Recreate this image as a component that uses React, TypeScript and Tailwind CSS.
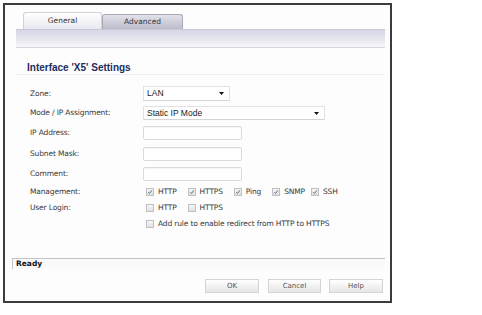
import React from "react";

const lbl = "font-['DejaVu_Sans',sans-serif] text-[7.5px] tracking-[-0.15px] text-[#383838]";

function Check({ checked }: { checked?: boolean }) {
  return (
    <span className="relative inline-block w-[8px] h-[8px] border border-[#c0c0c0] bg-gradient-to-b from-[#f6f6f6] to-[#e0e0e0] shrink-0">
      {checked && (
        <svg className="absolute left-[0px] top-[0px]" width="6" height="6" viewBox="0 0 6 6">
          <path d="M1.3 3.3 L2.5 4.5 L4.8 1.3" stroke="#4a5a7a" strokeWidth="0.9" fill="none" />
        </svg>
      )}
    </span>
  );
}

function CB({ checked, label, gap = "mr-[11px]" }: { checked?: boolean; label: string; gap?: string }) {
  return (
    <span className={`flex items-center ${gap}`}>
      <Check checked={checked} />
      <span className={`${lbl} ml-[4px]`}>{label}</span>
    </span>
  );
}

function Row({ label, mt, h, children }: { label: string; mt: string; h: string; children?: React.ReactNode }) {
  return (
    <div className={`flex items-center ${mt} ${h}`}>
      <div className={`${lbl} w-[113px] shrink-0`}>{label}</div>
      <div className="flex items-center h-full">{children}</div>
    </div>
  );
}

function Select({ w, text }: { w: string; text: string }) {
  return (
    <div className={`${w} h-full flex items-center justify-between border border-[#e2e2e2] border-b-[#d4d4d4] bg-white pl-[3px] pr-[5px]`}>
      <span className="font-['Liberation_Sans',sans-serif] text-[8.5px] text-[#222]">{text}</span>
      <svg width="5" height="3" viewBox="0 0 5 3">
        <path d="M0 0 L5 0 L2.5 3 Z" fill="#111" />
      </svg>
    </div>
  );
}

function Input() {
  return <div className="w-[99px] h-full border border-[#dadada] rounded-[2px] bg-white shadow-[inset_0_1px_1px_rgba(0,0,0,0.04)]" />;
}

function Btn({ text, w, ml }: { text: string; w: string; ml?: string }) {
  return (
    <div className={`${w} ${ml ?? ""} h-[14px] border border-[#d4d4d4] bg-gradient-to-b from-[#ffffff] to-[#e6e6e6] flex items-center justify-center font-['DejaVu_Sans',sans-serif] text-[7px] text-[#555]`}>
      {text}
    </div>
  );
}

export default function App() {
  return (
    <div className="w-[482px] h-[315px] bg-white overflow-hidden pt-[3px] pl-[3px]">
      <div className="w-[389px] h-[300px] border-2 border-[#3c3c3c] bg-[#fdfdfd] flex flex-col">
        {/* tabs */}
        <div className="ml-[18px] mt-[7px] flex items-end h-[17px]">
          <div className="w-[79px] h-[17px] rounded-t-[3px] border border-b-0 border-[#d2d2da] bg-gradient-to-b from-[#ffffff] to-[#e8e8f0] flex items-center justify-center font-['DejaVu_Sans',sans-serif] text-[7.5px] text-[#333]">
            General
          </div>
          <div className="w-[81px] h-[15px] rounded-t-[3px] border border-b-0 border-[#a9a9b8] bg-gradient-to-b from-[#e2e2ea] to-[#bcbccb] flex items-center justify-center font-['DejaVu_Sans',sans-serif] text-[7.5px] text-[#333]">
            Advanced
          </div>
        </div>
        {/* band */}
        <div className="ml-[11px] mr-[5px] h-[19px] border-t border-[#c8c8d8] border-b border-b-[#d8d8e4] bg-gradient-to-b from-[#d6d6e6] to-[#f6f6fa]" />
        {/* title */}
        <div className="ml-[11px] mr-[5px] h-[27px] pt-[14px] pl-[11px] border-b border-[#eeeef2]">
          <div className="font-['Liberation_Sans',sans-serif] font-bold text-[10px] leading-[12px] text-[#1e2d5c]">
            Interface 'X5' Settings
          </div>
        </div>
        {/* form */}
        <div className="pl-[25px] flex flex-col">
          <Row label="Zone:" mt="mt-[11px]" h="h-[15px]">
            <Select w="w-[87px]" text="LAN" />
          </Row>
          <Row label="Mode / IP Assignment:" mt="mt-[5px]" h="h-[14px]">
            <Select w="w-[182px]" text="Static IP Mode" />
          </Row>
          <Row label="IP Address:" mt="mt-[6px]" h="h-[14px]">
            <Input />
          </Row>
          <Row label="Subnet Mask:" mt="mt-[7px]" h="h-[14px]">
            <Input />
          </Row>
          <Row label="Comment:" mt="mt-[6px]" h="h-[14px]">
            <Input />
          </Row>
          <Row label="Management:" mt="mt-[4px]" h="h-[14px]">
            <div className="flex items-center pl-[3px]">
              <CB checked label="HTTP" />
              <CB checked label="HTTPS" />
              <CB checked label="Ping" />
              <CB checked label="SNMP" gap="mr-[6px]" />
              <CB checked label="SSH" />
            </div>
          </Row>
          <Row label="User Login:" mt="mt-[2px]" h="h-[14px]">
            <div className="flex items-center pl-[3px]">
              <CB label="HTTP" />
              <CB label="HTTPS" />
            </div>
          </Row>
          <Row label="" mt="mt-[2px]" h="h-[14px]">
            <div className="flex items-center pl-[3px]">
              <CB label="Add rule to enable redirect from HTTP to HTTPS" />
            </div>
          </Row>
        </div>
        {/* status */}
        <div className="ml-[7px] mr-[5px] mt-[27px] h-[11px] border-t border-l border-[#c4c4c4] bg-[#fafafa] pl-[3px] flex items-center">
          <span className="font-['DejaVu_Sans',sans-serif] font-bold text-[7.5px] text-[#111]">Ready</span>
        </div>
        {/* buttons */}
        <div className="mt-[10px] flex justify-end pr-[7px]">
          <Btn text="OK" w="w-[54px]" />
          <Btn text="Cancel" w="w-[53px]" ml="ml-[9px]" />
          <Btn text="Help" w="w-[54px]" ml="ml-[8px]" />
        </div>
      </div>
    </div>
  );
}
